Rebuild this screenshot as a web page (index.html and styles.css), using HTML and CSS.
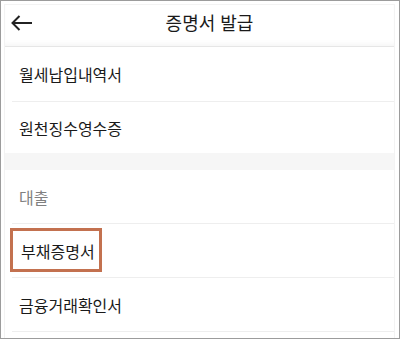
FILE: index.html
```html
<!DOCTYPE html>
<html lang="ko">
<head>
<meta charset="utf-8">
<link rel="stylesheet" href="styles.css">
</head>
<body>
<div class="frame">
  <div class="screen">
    <header class="header">
      <span class="back">
        <svg width="22" height="16" viewBox="0 0 22 16"><path d="M21 8H1.5M8.5 1L1.5 8L8.5 15" fill="none" stroke="#222" stroke-width="2"/></svg>
      </span>
      <h1 class="title">증명서 발급</h1>
      <span class="spacer"></span>
    </header>
    <div class="item item-first">월세납입내역서</div>
    <div class="item item-last">원천징수영수증</div>
    <div class="band"></div>
    <div class="item section">대출</div>
    <div class="item highlighted"><span class="mark"></span>부채증명서</div>
    <div class="item">금융거래확인서</div>
  </div>
</div>
</body>
</html>
```

FILE: styles.css
```css
html, body {
  margin: 0;
  padding: 0;
  background: #fff;
}
.frame {
  width: 400px;
  height: 339px;
  box-sizing: border-box;
  border: 1px solid #9c9c9c;
  padding: 3px 4px 0 3px;
  overflow: hidden;
  font-family: "Noto Sans CJK KR", "Noto Sans", sans-serif;
  color: #1a1a1a;
}
.screen {
  height: 100%;
  box-sizing: border-box;
  border: 1px solid #f3f3f3;
  border-bottom: none;
}
.header {
  display: grid;
  grid-template-columns: 38px 1fr 18px;
  align-items: center;
  height: 42px;
  padding-bottom: 8px;
  box-sizing: border-box;
  border-bottom: 1px solid #e6e6e6;
  box-shadow: 0 -5px 6px -4px #f2f2f2 inset;
}
.back {
  display: flex;
  padding-left: 6px;
  padding-top: 2px;
}
.title {
  margin: 0;
  font-size: 18px;
  font-weight: 400;
  text-align: center;
  line-height: 20px;
}
.item {
  position: relative;
  display: flex;
  align-items: center;
  height: 54px;
  box-sizing: border-box;
  margin-left: 7px;
  padding-left: 7px;
  border-bottom: 1px solid #eeeeee;
  font-size: 16px;
}
.item-first {
  height: 55px;
}
.item-last {
  height: 51px;
  border-bottom: none;
}
.band {
  height: 17px;
  background: #f6f6f6;
}
.section {
  color: #808080;
}
.highlighted {
  padding-left: 9px;
}
.mark {
  position: absolute;
  left: -2px;
  top: 4px;
  width: 92px;
  height: 44px;
  box-sizing: border-box;
  border: 3px solid #c3714f;
}
```
